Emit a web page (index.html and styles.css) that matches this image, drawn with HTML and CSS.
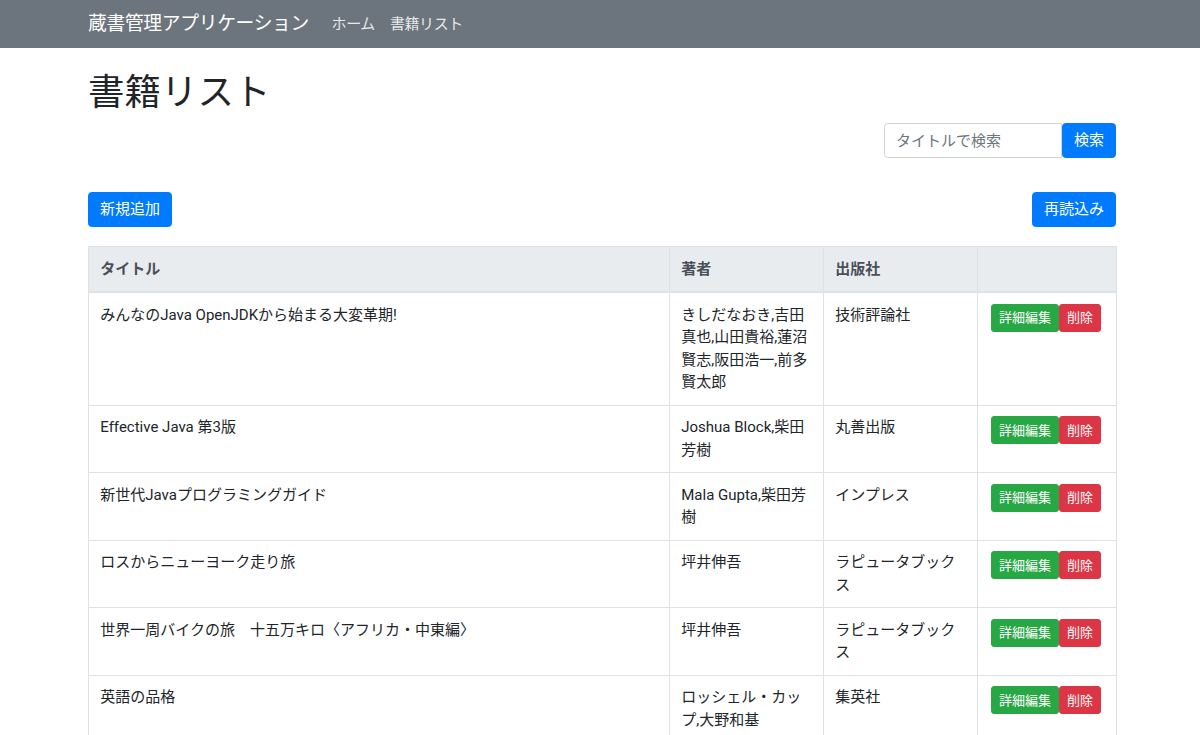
FILE: index.html
```html
<!DOCTYPE html>
<html lang="ja">
<head>
<meta charset="utf-8">
<title>書籍リスト</title>
<link rel="stylesheet" href="styles.css">
</head>
<body>
<nav class="navbar">
  <div class="navbar-inner">
    <a class="brand" href="#">蔵書管理アプリケーション</a>
    <a class="nav-link" href="#">ホーム</a>
    <a class="nav-link" href="#">書籍リスト</a>
  </div>
</nav>
<main class="container">
  <h1 class="page-title">書籍リスト</h1>
  <form class="search-form">
    <input class="search-input" type="text" placeholder="タイトルで検索">
    <button class="btn btn-primary search-btn" type="button">検索</button>
  </form>
  <div class="toolbar">
    <button class="btn btn-primary" type="button">新規追加</button>
    <button class="btn btn-primary" type="button">再読込み</button>
  </div>
  <table class="book-table">
    <colgroup>
      <col class="col-title">
      <col class="col-author">
      <col class="col-publisher">
      <col class="col-actions">
    </colgroup>
    <thead>
      <tr><th>タイトル</th><th>著者</th><th>出版社</th><th></th></tr>
    </thead>
    <tbody>
      <tr>
        <td>みんなのJava OpenJDKから始まる大変革期!</td>
        <td>きしだなおき,吉田真也,山田貴裕,蓮沼賢志,阪田浩一,前多賢太郎</td>
        <td>技術評論社</td>
        <td class="actions"><button class="btn-sm btn-success" type="button">詳細編集</button><button class="btn-sm btn-danger" type="button">削除</button></td>
      </tr>
      <tr>
        <td>Effective Java 第3版</td>
        <td>Joshua Block,柴田芳樹</td>
        <td>丸善出版</td>
        <td class="actions"><button class="btn-sm btn-success" type="button">詳細編集</button><button class="btn-sm btn-danger" type="button">削除</button></td>
      </tr>
      <tr>
        <td>新世代Javaプログラミングガイド</td>
        <td>Mala Gupta,柴田芳樹</td>
        <td>インプレス</td>
        <td class="actions"><button class="btn-sm btn-success" type="button">詳細編集</button><button class="btn-sm btn-danger" type="button">削除</button></td>
      </tr>
      <tr>
        <td>ロスからニューヨーク走り旅</td>
        <td>坪井伸吾</td>
        <td>ラピュータブックス</td>
        <td class="actions"><button class="btn-sm btn-success" type="button">詳細編集</button><button class="btn-sm btn-danger" type="button">削除</button></td>
      </tr>
      <tr>
        <td>世界一周バイクの旅　十五万キロ〈アフリカ・中東編〉</td>
        <td>坪井伸吾</td>
        <td>ラピュータブックス</td>
        <td class="actions"><button class="btn-sm btn-success" type="button">詳細編集</button><button class="btn-sm btn-danger" type="button">削除</button></td>
      </tr>
      <tr>
        <td>英語の品格</td>
        <td>ロッシェル・カップ,大野和基</td>
        <td>集英社</td>
        <td class="actions"><button class="btn-sm btn-success" type="button">詳細編集</button><button class="btn-sm btn-danger" type="button">削除</button></td>
      </tr>
    </tbody>
  </table>
</main>
</body>
</html>
```
FILE: styles.css
```css
* { box-sizing: border-box; }
html, body {
  margin: 0;
  padding: 0;
  background: #fff;
  color: #212529;
  font-family: Roboto, "Noto Sans CJK JP", sans-serif;
  font-size: 15px;
  line-height: 22.5px;
}
a { text-decoration: none; }

.navbar {
  background: #6c757d;
  height: 48px;
}
.navbar-inner {
  margin-left: 88px;
  height: 48px;
  display: flex;
  align-items: center;
}
.brand {
  color: #fff;
  font-size: 18.75px;
  line-height: 28px;
  margin-right: 15px;
  letter-spacing: -0.3px;
}
.nav-link {
  color: rgba(255, 255, 255, 0.85);
  padding: 0 7.5px;
  font-size: 15px;
  letter-spacing: -0.4px;
}

.container {
  width: 1028px;
  margin-left: 88px;
  padding-top: 22px;
}
.page-title {
  margin: 0 0 8px;
  font-size: 36.5px;
  line-height: 45px;
  font-weight: 400;
}
.search-form {
  display: flex;
  justify-content: flex-end;
  margin: 0;
}
.search-input {
  width: 178px;
  height: 35px;
  border: 1px solid #ced4da;
  border-radius: 3.75px 0 0 3.75px;
  padding: 5px 11px;
  font-family: inherit;
  font-size: 15px;
  color: #495057;
  outline: none;
}
.search-input::placeholder { color: #6c757d; }
.search-btn {
  width: 54px;
  border-radius: 0 3.75px 3.75px 0;
}

.btn {
  height: 35px;
  border: 1px solid transparent;
  border-radius: 3.75px;
  padding: 0 11px;
  font-family: inherit;
  font-size: 15px;
  line-height: 22.5px;
  cursor: pointer;
}
.btn-primary {
  background: #007bff;
  border-color: #007bff;
  color: #fff;
}
.toolbar {
  display: flex;
  justify-content: space-between;
  margin-top: 34px;
  margin-bottom: 19px;
}

.book-table {
  width: 1028px;
  table-layout: fixed;
  border-collapse: collapse;
}
.col-title { width: 581px; }
.col-author { width: 154px; }
.col-publisher { width: 154px; }
.col-actions { width: 139px; }
.book-table th,
.book-table td {
  border: 1px solid #dee2e6;
  padding: 10.75px 11.25px;
  text-align: left;
  vertical-align: top;
  line-height: 22.5px;
}
.book-table th {
  background: #e9ecef;
  color: #495057;
  font-weight: 700;
  border-bottom-width: 2px;
}
.book-table td.actions {
  padding-left: 13px;
  padding-right: 8px;
  white-space: nowrap;
}
.btn-sm {
  height: 28px;
  border: 1px solid transparent;
  border-radius: 3px;
  padding: 0 7px;
  font-family: inherit;
  font-size: 13px;
  line-height: 19px;
  color: #fff;
  vertical-align: top;
  cursor: pointer;
}
.btn-success { background: #28a745; border-color: #28a745; }
.btn-danger { background: #dc3545; border-color: #dc3545; }
```
